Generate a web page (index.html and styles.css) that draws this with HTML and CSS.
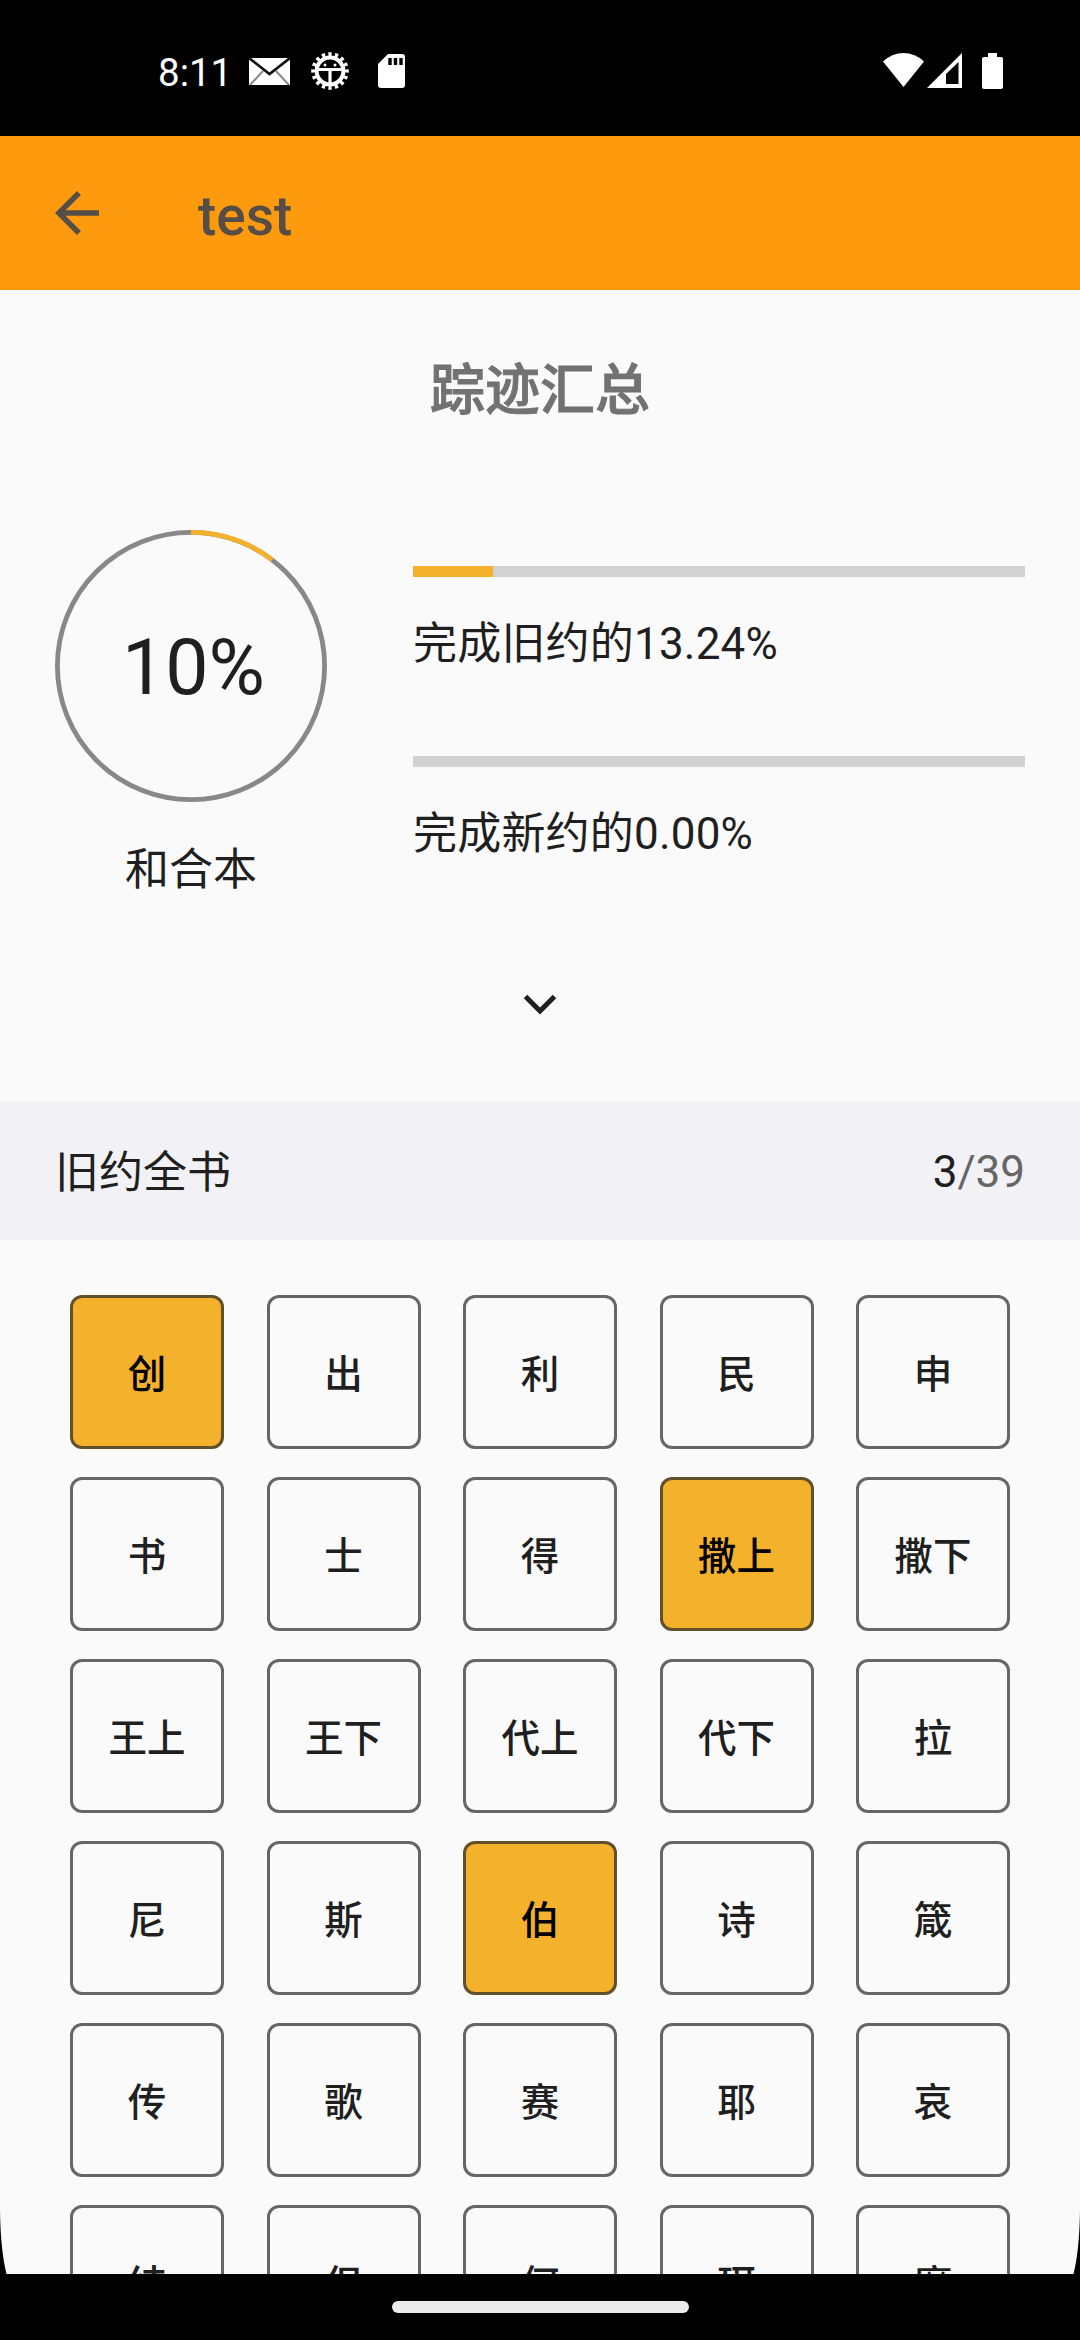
FILE: index.html
```html
<!DOCTYPE html>
<html lang="zh-CN">
<head>
<meta charset="utf-8">
<title>test</title>
<link rel="stylesheet" href="styles.css">
</head>
<body>
<div class="screen">
  <div class="status">
    <span class="clock">8:11</span>
    <svg class="mail" width="41" height="27" viewBox="0 0 41 27">
      <rect width="41" height="27" fill="#fff"/>
      <path d="M1 27 14 13M40 27 27 13" stroke="#888" stroke-width="2" fill="none"/>
      <path d="M0 0 20.5 16 41 0" stroke="#111" stroke-width="2.6" fill="none"/>
    </svg>
    <svg class="gear" width="38" height="38" viewBox="-19 -19 38 38">
      <circle r="16.6" fill="none" stroke="#fff" stroke-width="4.4" pathLength="32" stroke-dasharray="1 1" stroke-dashoffset="0.5"/>
      <circle r="13.4" fill="none" stroke="#fff" stroke-width="4"/>
      <path d="M-13-1.5H13M0-1V13" stroke="#fff" stroke-width="3.2"/>
      <circle cx="-5" cy="-6" r="1.5" fill="#fff"/>
      <circle cx="5" cy="-6" r="1.5" fill="#fff"/>
    </svg>
    <svg class="sd" width="27" height="34" viewBox="0 0 27 34">
      <path d="M10 0H24a3 3 0 0 1 3 3V31a3 3 0 0 1-3 3H3a3 3 0 0 1-3-3V10Z" fill="#fff"/>
      <path d="M12 4V11M17.5 4V11M23 4V11" stroke="#000" stroke-width="3.4"/>
    </svg>
    <span class="spacer"></span>
    <svg class="wifi" width="41" height="34" viewBox="0 0 41 34">
      <path d="M0 8.5Q9 0 20.5 0T41 8.5L20.5 34Z" fill="#fff"/>
    </svg>
    <svg class="signal" width="35" height="35" viewBox="0 0 35 35">
      <path fill-rule="evenodd" d="M35 0V35H0ZM31.5 9 19 21V31H31.5Z" fill="#fff"/>
    </svg>
    <svg class="battery" width="21" height="36" viewBox="0 0 21 36">
      <path d="M6 0H15V4H19a2 2 0 0 1 2 2V34a2 2 0 0 1-2 2H2a2 2 0 0 1-2-2V6A2 2 0 0 1 2 4H6Z" fill="#fff"/>
    </svg>
  </div>

  <header class="appbar">
    <svg width="66" height="66" viewBox="0 0 24 24"><path fill="#544e47" d="M20 11H7.83l5.59-5.59L12 4l-8 8 8 8 1.41-1.41L7.83 13H20z"/></svg>
    <h1 class="appbar-title">test</h1>
  </header>

  <main class="content">
    <h2 class="heading">踪迹汇总</h2>
    <section class="summary">
      <div class="overall">
        <div class="ring">
          <svg width="272" height="272" viewBox="0 0 272 272">
            <circle cx="136" cy="136" r="133.6" fill="none" stroke="#888" stroke-width="4.8"/>
            <circle cx="136" cy="136" r="133.6" fill="none" stroke="#f3b12c" stroke-width="4.8" pathLength="100" stroke-dasharray="10.4 89.6" transform="rotate(-90 136 136)"/>
          </svg>
          <span class="percent">10%</span>
        </div>
        <div class="version">和合本</div>
      </div>
      <div class="testaments">
        <div class="testament">
          <div class="bar"><div class="fill" style="width:13.1%"></div></div>
          <div class="label">完成旧约的13.24%</div>
        </div>
        <div class="testament">
          <div class="bar"></div>
          <div class="label">完成新约的0.00%</div>
        </div>
      </div>
    </section>
    <div class="expand">
      <svg width="34" height="22" viewBox="0 0 34 22"><path d="M2.5 2.5 17 17 31.5 2.5" fill="none" stroke="#1f1f1f" stroke-width="5"/></svg>
    </div>
    <div class="section-bar">
      <span class="section-name">旧约全书</span>
      <span class="count"><b class="done">3</b>/39</span>
    </div>
    <div class="books">
      <div class="book read">创</div><div class="book">出</div><div class="book">利</div><div class="book">民</div><div class="book">申</div>
      <div class="book">书</div><div class="book">士</div><div class="book">得</div><div class="book read">撒上</div><div class="book">撒下</div>
      <div class="book">王上</div><div class="book">王下</div><div class="book">代上</div><div class="book">代下</div><div class="book">拉</div>
      <div class="book">尼</div><div class="book">斯</div><div class="book read">伯</div><div class="book">诗</div><div class="book">箴</div>
      <div class="book">传</div><div class="book">歌</div><div class="book">赛</div><div class="book">耶</div><div class="book">哀</div>
      <div class="book">结</div><div class="book">但</div><div class="book">何</div><div class="book">珥</div><div class="book">摩</div>
    </div>
    <svg class="corner left" width="7" height="64" viewBox="0 0 7 64"><path d="M0 0Q.5 40 6.5 64H0Z"/></svg>
    <svg class="corner right" width="7" height="64" viewBox="0 0 7 64"><path d="M7 0Q6.5 40 .5 64H7Z"/></svg>
  </main>
  <div class="navbar"><div class="pill"></div></div>
</div>
</body>
</html>
```

FILE: styles.css
```css
* { box-sizing: border-box; }
body {
  margin: 0;
  background: #000;
  color: #1f1f1f;
  font-family: Roboto, "Noto Sans CJK SC", sans-serif;
}
svg { display: block; flex: none; }
.screen {
  width: 1080px;
  height: 2340px;
  display: flex;
  flex-direction: column;
  overflow: hidden;
}
.status {
  height: 136px;
  flex: none;
  display: flex;
  align-items: flex-start;
  padding: 52px 77px 0 158px;
  background: #000;
}
.clock {
  width: 91px;
  padding-top: 1px;
  color: #fff;
  font-size: 38.5px;
  line-height: 40px;
}
.mail { margin-top: 6px; }
.gear { margin-left: 21px; }
.sd { margin: 2px 0 0 29px; }
.spacer { flex: 1; }
.wifi { margin-top: 1px; }
.signal { margin: 1px 0 0 3px; }
.battery { margin: 1px 0 0 20px; }

.appbar {
  height: 154px;
  flex: none;
  display: flex;
  align-items: center;
  padding-left: 44px;
  background: #fe9a0e;
}
.appbar-title {
  margin: 6px 0 0 88px;
  font-size: 55px;
  font-weight: 500;
  line-height: 64px;
  color: #544e47;
}

.content {
  position: relative;
  height: 1984px;
  flex: none;
  overflow: hidden;
  background: #fafafa;
}
.heading {
  margin: 0;
  padding-top: 60px;
  height: 240px;
  text-align: center;
  font-size: 55px;
  font-weight: 500;
  line-height: 80px;
  color: #727272;
  -webkit-text-stroke: 0.9px #727272;
}
.summary {
  display: flex;
  justify-content: space-between;
  height: 464px;
  padding: 0 55px;
}
.overall { width: 272px; }
.ring { display: grid; }
.ring > * { grid-area: 1 / 1; }
.percent {
  align-self: center;
  text-align: center;
  padding: 4px 0 0 5px;
  font-size: 77px;
  line-height: 90px;
}
.version {
  margin-top: 36px;
  text-align: center;
  font-size: 44px;
  line-height: 64px;
}
.testaments { width: 612px; padding-top: 36px; }
.testament { height: 190px; }
.bar { height: 11px; background: #d2d2d2; }
.fill { height: 11px; background: #f3b12c; }
.label {
  margin-top: 35px;
  font-size: 44px;
  line-height: 64px;
  letter-spacing: 0.2px;
}
.expand {
  height: 108px;
  display: flex;
  justify-content: center;
}
.section-bar {
  height: 138px;
  display: flex;
  align-items: center;
  justify-content: space-between;
  padding: 0 55px;
  background: #f2f1f6;
  font-size: 44px;
  line-height: 64px;
}
.section-name { padding-top: 4px; }
.count { padding-top: 2px; color: #666; }
.done { font-weight: 400; color: #1f1f1f; }
.books {
  display: grid;
  grid-template-columns: repeat(5, 154px);
  justify-content: space-between;
  row-gap: 28px;
  padding: 55px 70px 0;
}
.book {
  height: 154px;
  display: flex;
  align-items: center;
  justify-content: center;
  padding-top: 5px;
  border: 3px solid #666;
  border-radius: 12px;
  font-size: 38.5px;
  font-weight: 500;
  line-height: 56px;
}
.book.read {
  background: #f3b12c;
  border-color: #61502a;
  color: #000;
}
.corner { position: absolute; bottom: 0; }
.left { left: 0; }
.right { right: 0; }

.navbar { flex: 1; padding-top: 27px; background: #000; }
.pill {
  width: 297px;
  height: 12px;
  margin: 0 auto;
  border-radius: 6px;
  background: #ebebeb;
}
```
